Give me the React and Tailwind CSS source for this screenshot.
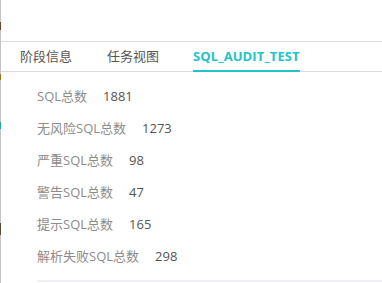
import React from "react";

const stats = [
  { label: "SQL总数", value: 1881 },
  { label: "无风险SQL总数", value: 1273 },
  { label: "严重SQL总数", value: 98 },
  { label: "警告SQL总数", value: 47 },
  { label: "提示SQL总数", value: 165 },
  { label: "解析失败SQL总数", value: 298 },
];

const font = { fontFamily: '"Open Sans", "Noto Sans CJK SC", sans-serif' };

export default function App() {
  return (
    <div className="w-[382px] h-[283px] bg-white overflow-hidden flex" style={font}>
      {/* left edge */}
      <div className="w-px h-full bg-[#c4c4c4] relative shrink-0">
        <div className="absolute top-[22px] left-0 w-px h-[8px] bg-[#6b4a2a]" />
        <div className="absolute top-[74px] left-0 w-px h-[6px] bg-[#a07020]" />
        <div className="absolute top-[122px] left-0 w-px h-[7px] bg-[#1aa8a8]" />
        <div className="absolute top-[223px] left-0 w-px h-[12px] bg-[#5a4a3a]" />
      </div>
      <div className="flex-1 flex flex-col">
        <div className="h-[41px]" />
        <div className="h-[31px] border-t border-b border-[#dcdcdc] flex items-stretch pl-[19px] text-[13px]">
          <div className="flex items-center text-[#555] mr-[35px]">阶段信息</div>
          <div className="flex items-center text-[#555] mr-[34px]">任务视图</div>
          <div className="flex items-center font-bold text-[#22c4c9] border-b-2 border-[#22c4c9] -mb-px pt-[2px] tracking-[0.1px]">
            SQL_AUDIT_TEST
          </div>
        </div>
        <div className="pl-[36px] pt-[9px] flex flex-col">
          {stats.map((s) => (
            <div key={s.label} className="h-[32px] flex items-center text-[13px]">
              <span className="text-[#8c8c8c]">{s.label}</span>
              <span className="text-[#555] ml-[16px]">{s.value}</span>
            </div>
          ))}
          <div className="mt-[7px] h-[2px] bg-[#eef0f6]" />
        </div>
      </div>
    </div>
  );
}
